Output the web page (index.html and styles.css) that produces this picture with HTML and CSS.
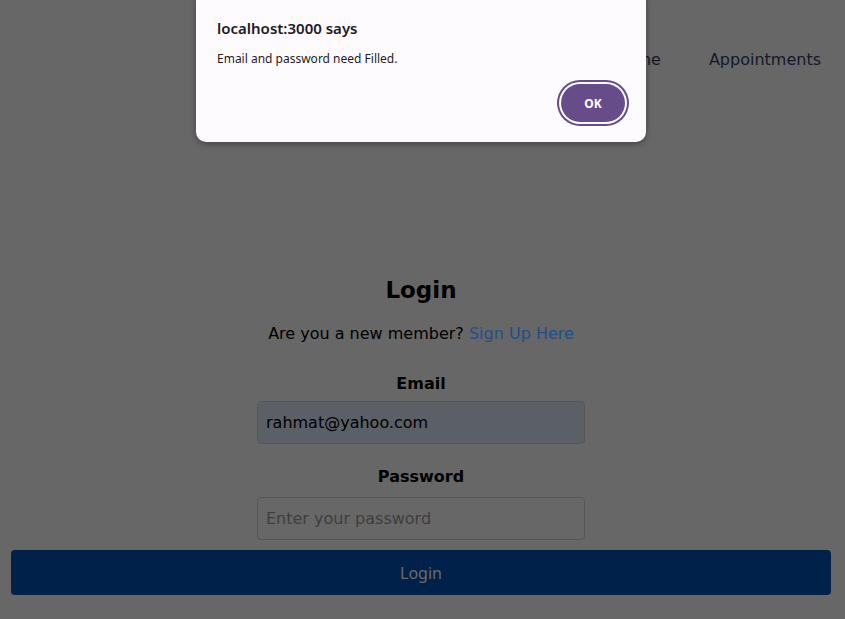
FILE: index.html
```html
<!DOCTYPE html>
<html lang="en">
<head>
<meta charset="utf-8">
<title>Login</title>
<link rel="stylesheet" href="styles.css">
</head>
<body>
<header class="nav">
  <a class="nav-link">Home</a>
  <a class="nav-link">Appointments</a>
</header>
<main class="login">
  <h2 class="title">Login</h2>
  <p class="subtitle">Are you a new member? <a class="link">Sign Up Here</a></p>
  <form class="form">
    <label class="label">Email</label>
    <input class="input input-filled" type="text" value="rahmat@yahoo.com">
    <label class="label label-pw">Password</label>
    <input class="input" type="password" placeholder="Enter your password">
  </form>
  <button class="submit" type="button">Login</button>
</main>
<div class="dialog">
  <div class="dialog-title">localhost:3000 says</div>
  <div class="dialog-msg">Email and password need Filled.</div>
  <div class="dialog-actions">
    <button class="ok" type="button">OK</button>
  </div>
</div>
</body>
</html>
```
FILE: styles.css
```css
html, body {
  margin: 0;
  padding: 0;
}
body {
  background: #676767;
  font-family: "DejaVu Sans", sans-serif;
  width: 845px;
  height: 619px;
  overflow: hidden;
  position: relative;
}
.nav {
  display: flex;
  justify-content: flex-end;
  gap: 48px;
  padding: 49px 24px 0 0;
  height: 23px;
}
.nav-link {
  font-size: 16px;
  color: #14182a;
  line-height: 22px;
}
.login {
  display: flex;
  flex-direction: column;
  align-items: center;
  padding-top: 202px;
  padding-right: 3px;
}
.title {
  margin: 0;
  font-size: 23px;
  font-weight: bold;
  color: #000;
  line-height: 32px;
}
.subtitle {
  margin: 16px 0 0;
  font-size: 16px;
  line-height: 24px;
  color: #000;
}
.link {
  color: #1f4e8c;
}
.form {
  display: flex;
  flex-direction: column;
  align-items: center;
  margin-top: 27px;
}
.label {
  font-size: 16px;
  font-weight: bold;
  color: #000;
  line-height: 22px;
  margin-bottom: 6px;
}
.label-pw {
  margin-bottom: 9px;
}
.input {
  box-sizing: border-box;
  width: 328px;
  height: 43px;
  border: 1px solid #565656;
  border-radius: 4px;
  background: #676767;
  padding: 0 8px;
  font-family: inherit;
  font-size: 16px;
  color: #000;
  margin-bottom: 22px;
  outline: none;
}
.input-filled {
  background: #5b5f66;
}
.input::placeholder {
  color: #3e3e3e;
}
.submit {
  margin-top: -12px;
  align-self: stretch;
  margin-left: 11px;
  margin-right: 11px;
  height: 45px;
  border: none;
  border-radius: 4px;
  background: #00224a;
  color: #6b6b6b;
  font-family: "Noto Sans", sans-serif;
  font-size: 16px;
}
.dialog {
  position: absolute;
  left: 196px;
  top: -10px;
  width: 450px;
  height: 152px;
  box-sizing: border-box;
  background: #fefbff;
  border-radius: 10px;
  box-shadow: 0 2px 6px rgba(0, 0, 0, 0.35);
  padding: 27px 20px 0 21px;
  font-family: "Noto Sans", sans-serif;
  color: #1f1a24;
}
.dialog-title {
  font-size: 15px;
  font-weight: 600;
  line-height: 22px;
}
.dialog-msg {
  font-size: 12px;
  line-height: 18px;
  margin-top: 11px;
}
.dialog-actions {
  display: flex;
  justify-content: flex-end;
  margin-top: 16px;
}
.ok {
  width: 64px;
  height: 38px;
  border-radius: 19px;
  border: none;
  background: #664d8a;
  color: #fff;
  font-family: "Noto Sans", sans-serif;
  font-weight: bold;
  font-size: 12px;
  box-shadow: 0 0 0 2px #fefbff, 0 0 0 4px #664d8a;
  margin-right: 1px;
}
```
